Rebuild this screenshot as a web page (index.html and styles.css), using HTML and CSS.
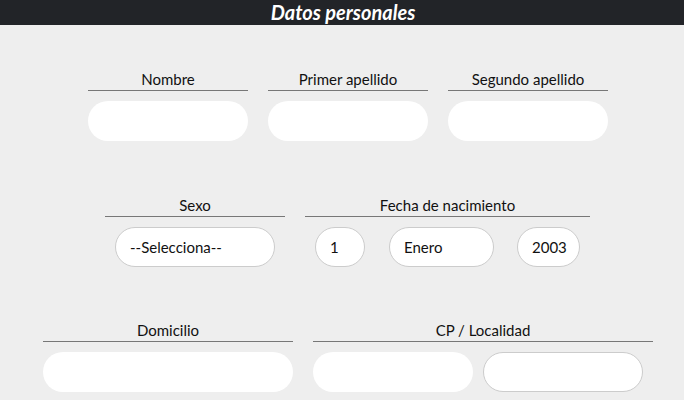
FILE: index.html
```html
<!DOCTYPE html>
<html lang="es">
<head>
<meta charset="utf-8">
<title>Datos personales</title>
<link rel="stylesheet" href="styles.css">
</head>
<body>
<header class="topbar"><h1 class="title">Datos personales</h1></header>
<main class="form">
  <div class="row row-1">
    <div class="field w160">
      <div class="label">Nombre</div>
      <input class="box w160" type="text">
    </div>
    <div class="field w160">
      <div class="label">Primer apellido</div>
      <input class="box w160" type="text">
    </div>
    <div class="field w160">
      <div class="label">Segundo apellido</div>
      <input class="box w160" type="text">
    </div>
  </div>
  <div class="row row-2">
    <div class="field w180">
      <div class="label">Sexo</div>
      <div class="inputs pad10">
        <div class="box bordered w160 txt">--Selecciona--</div>
      </div>
    </div>
    <div class="field w285">
      <div class="label">Fecha de nacimiento</div>
      <div class="inputs pad10 date">
        <div class="box bordered w50 txt">1</div>
        <div class="box bordered w105 txt">Enero</div>
        <div class="box bordered w63 txt">2003</div>
      </div>
    </div>
  </div>
  <div class="row row-3">
    <div class="field w250">
      <div class="label">Domicilio</div>
      <input class="box w250" type="text">
    </div>
    <div class="field w340">
      <div class="label">CP / Localidad</div>
      <div class="inputs cp">
        <input class="box w160" type="text">
        <input class="box bordered w160" type="text">
      </div>
    </div>
  </div>
</main>
</body>
</html>
```
FILE: styles.css
```css
* { box-sizing: border-box; }
html, body { margin: 0; padding: 0; }
body {
  background: #eeeeee;
  font-family: Lato, "Open Sans", sans-serif;
  color: #111;
  width: 684px;
  height: 400px;
  overflow: hidden;
}
.topbar {
  background: #222428;
  height: 25px;
  display: flex;
  justify-content: center;
  align-items: center;
}
.title {
  margin: 0;
  color: #fff;
  font-size: 20px;
  font-weight: 700;
  font-style: italic;
  line-height: 25px;
  padding-left: 2px;
}
.form { padding-left: 12px; }
.row { display: flex; justify-content: center; }
.row-1 { margin-top: 45px; gap: 20px; }
.row-2 { margin-top: 55px; gap: 20px; margin-left: -1px; }
.row-3 { margin-top: 54px; gap: 20px; }
.field { display: flex; flex-direction: column; }
.label {
  font-size: 15px;
  line-height: 19px;
  height: 21px;
  text-align: center;
  border-bottom: 1px solid #777;
  margin-bottom: 10px;
}
.box {
  display: block;
  height: 40px;
  border: none;
  border-radius: 20px;
  background: #fff;
  font: inherit;
  font-size: 15px;
  outline: none;
  padding: 0;
}
.bordered { border: 1px solid #cccccc; }
.txt { display: flex; align-items: center; padding-left: 14px; }
.inputs { display: flex; }
.pad10 { padding: 0 10px; }
.date { gap: 24px; }
.date .w105 + .w63 { margin-left: -1px; }
.cp { gap: 10px; }
.w50 { width: 50px; }
.w63 { width: 63px; }
.w105 { width: 105px; }
.w160 { width: 160px; }
.w180 { width: 180px; }
.w250 { width: 250px; }
.w285 { width: 285px; }
.w340 { width: 340px; }
```
